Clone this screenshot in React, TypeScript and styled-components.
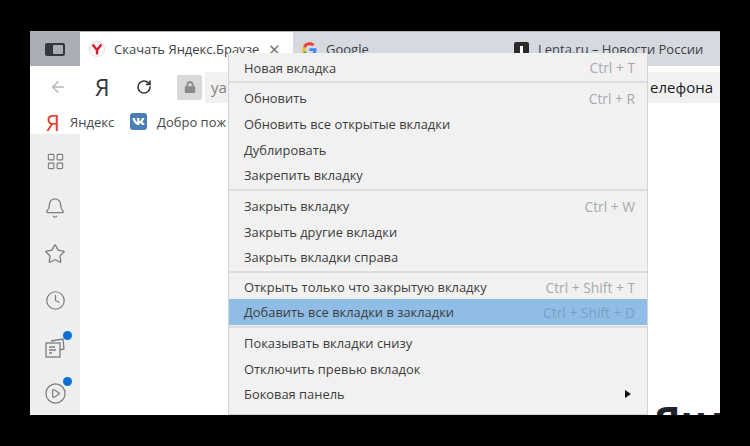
import React from "react";
import styled, { createGlobalStyle } from "styled-components";
import { ArrowLeft, Bell, CirclePlay, Clock, LayoutGrid, RotateCw, Star } from "lucide-react";
import { FaLock, FaVk } from "react-icons/fa";

const GlobalStyle = createGlobalStyle`
  html, body {
    margin: 0;
    height: 446px;
    overflow: hidden;
    background: #000;
    font-family: "Open Sans", "Noto Sans", sans-serif;
  }
`;

const Frame = styled.div`
  width: 750px;
  height: 446px;
  padding: 31px 30px 31px 30px;
  box-sizing: border-box;
`;

const Window = styled.div`
  position: relative;
  width: 690px;
  height: 384px;
  display: flex;
  flex-direction: column;
  background: #fff;
  border-top: 1px solid #a9b3bb;
  box-sizing: border-box;
  overflow: hidden;
`;

const TabStrip = styled.div`
  display: flex;
  height: 34px;
  flex: none;
  background: #d6d9e0;
`;

const SideToggle = styled.div`
  width: 50px;
  background: #a9adb4;
  display: flex;
  align-items: center;
  justify-content: center;
`;

const Tab = styled.div<{ $active?: boolean; $width: number }>`
  width: ${(p) => p.$width}px;
  flex: none;
  background: ${(p) => (p.$active ? "#fff" : "transparent")};
  display: flex;
  align-items: center;
  gap: 9px;
  padding-left: 9px;
  box-sizing: border-box;
  font-size: 13px;
  color: #3c3f44;
  white-space: nowrap;
  overflow: hidden;
`;

const TabTitle = styled.span`
  flex: 1;
  overflow: hidden;
`;

const TabClose = styled.span`
  width: 25px;
  flex: none;
  font-size: 15px;
  color: #777;
`;

const AddressRow = styled.div`
  height: 37px;
  flex: none;
  box-sizing: border-box;
  display: flex;
  align-items: center;
  background: #fff;
  padding: 5px 0 0 19px;
`;

const NavSlot = styled.div<{ $width: number }>`
  width: ${(p) => p.$width}px;
  flex: none;
  display: flex;
  align-items: center;
`;

const BrandLetter = styled.span`
  font-size: 23px;
  line-height: 24px;
  color: #33363a;
`;

const LockBox = styled.div`
  width: 25px;
  height: 25px;
  background: #d9d9d9;
  border-radius: 2px;
  display: flex;
  align-items: center;
  justify-content: center;
  margin-right: 3px;
  flex: none;
`;

const UrlBox = styled.div`
  flex: 1;
  height: 31px;
  background: #f1f1f1;
  display: flex;
  align-items: center;
  justify-content: space-between;
  padding: 0 7px 0 6px;
  font-size: 15px;
  color: #808080;
`;

const UrlTail = styled.span`
  color: #1b1b1b;
`;

const BookmarkBar = styled.div`
  height: 31px;
  flex: none;
  box-sizing: border-box;
  display: flex;
  align-items: center;
  padding: 6px 0 0 16px;
  font-size: 13px;
  color: #45484c;
  white-space: nowrap;
`;

const BookmarkLogo = styled.span`
  color: #e8392b;
  font-size: 22px;
  width: 24px;
  flex: none;
`;

const BookmarkLabel = styled.span`
  width: 60px;
  flex: none;
`;

const VkBadge = styled.span`
  width: 17px;
  height: 17px;
  background: #4a7eb5;
  border-radius: 3px;
  display: flex;
  align-items: center;
  justify-content: center;
  margin-right: 10px;
  flex: none;
`;

const Body = styled.div`
  flex: 1;
  min-height: 0;
  display: flex;
`;

const Sidebar = styled.div`
  width: 50px;
  flex: none;
  background: #eeeeee;
  display: flex;
  flex-direction: column;
  align-items: center;
  padding-top: 4px;
  box-sizing: border-box;
`;

const SideItem = styled.div`
  position: relative;
  height: 46.4px;
  width: 50px;
  flex: none;
  display: flex;
  align-items: center;
  justify-content: center;
  color: #7d7d7d;
`;

const Dot = styled.span`
  position: absolute;
  right: 8px;
  top: 7px;
  width: 9px;
  height: 9px;
  border-radius: 50%;
  background: #0b6fd6;
`;

const Content = styled.div`
  flex: 1;
  overflow: hidden;
  padding: 264px 0 0 574px;
  font-size: 40px;
  line-height: 44px;
  font-weight: 700;
  color: #20202e;
  white-space: nowrap;
`;

const Menu = styled.div`
  position: absolute;
  left: 198px;
  top: 21px;
  width: 420px;
  height: 362px;
  box-sizing: border-box;
  background: #f1f1f1;
  border-left: 1px solid #d4d4d4;
  border-right: 1px solid #d4d4d4;
  border-bottom: 1px solid #d4d4d4;
  padding-top: 2px;
`;

const MenuRow = styled.div<{ $highlight?: boolean; $step: number }>`
  height: ${(p) => p.$step}px;
  display: flex;
  align-items: center;
  justify-content: space-between;
  padding: 0 11px 0 15px;
  font-size: 12.9px;
  color: #3d3d3d;
  background: ${(p) => (p.$highlight ? "#8fbde6" : "transparent")};
`;

const Shortcut = styled.span<{ $highlight?: boolean }>`
  color: ${(p) => (p.$highlight ? "#7c9fbf" : "#a8a8a8")};
  font-size: 13.8px;
  padding-right: 1px;
`;

const MenuDivider = styled.div`
  height: 2px;
  margin: 1px 0 2px;
  background: #dcdcdc;
`;

const Arrow = styled.span`
  width: 0;
  height: 0;
  margin-right: 5px;
  border-left: 6px solid #111;
  border-top: 4px solid transparent;
  border-bottom: 4px solid transparent;
`;

const YandexTabIcon = () => (
  <svg width="16" height="16" viewBox="0 0 16 16">
    <circle cx="8" cy="8" r="7.5" fill="#fff" stroke="#f2d5d5" />
    <path d="M3.6 3.6 L8 9 L12.4 3.6 M8 9 V13.4" fill="none" stroke="#e3152b" strokeWidth="2.4" />
  </svg>
);

const GoogleIcon = () => (
  <svg width="15" height="15" viewBox="0 0 48 48">
    <path fill="#ea4335" d="M24 10c3.500 0 6.600 1.200 9 3.500l6.700-6.700C35.600 3.100 30.200 1 24 1 15 1 7.300 6.100 3.500 13.600l7.800 6C13.200 14.100 18.100 10 24 10z" />
    <path fill="#4285f4" d="M46.500 24.500c0-1.600-.1-3.100-.4-4.500H24v9h12.700c-.6 2.900-2.200 5.300-4.700 7l7.300 5.700c4.300-4 7.200-9.900 7.200-17.200z" />
    <path fill="#fbbc05" d="M11.300 28.400c-.5-1.400-.7-2.900-.7-4.400s.3-3 .7-4.400l-7.800-6C1.900 16.800 1 20.300 1 24s.9 7.200 2.500 10.400l7.800-6z" />
    <path fill="#34a853" d="M24 47c6.200 0 11.400-2 15.300-5.600L32 35.700c-2 1.400-4.700 2.300-8 2.300-5.900 0-10.800-4-12.700-9.600l-7.800 6C7.300 41.900 15 47 24 47z" />
  </svg>
);

const LentaIcon = () => (
  <svg width="15" height="15" viewBox="0 0 15 15">
    <rect width="15" height="15" rx="2" fill="#2b2b2b" />
    <rect x="6" y="4" width="3" height="11" fill="#fff" />
  </svg>
);

const PanelIcon = () => (
  <svg width="20" height="13" viewBox="0 0 20 13">
    <rect width="20" height="13" rx="2" fill="#34383e" />
    <rect x="8" y="2" width="10" height="9" rx="1" fill="#a9adb4" />
  </svg>
);

const NotesIcon = () => (
  <svg width="22" height="22" viewBox="0 0 22 22" fill="none" stroke="#7d7d7d" strokeWidth="1.300">
    <path d="M7 5 L19 3 L20 13 L16 14" />
    <rect x="2" y="7" width="14" height="14" />
    <path d="M5 11 H11 M5 14 H12 M5 17 H8" />
  </svg>
);

const firstGroup = [
  { label: "Обновить", key: "Ctrl + R", step: 26 },
  { label: "Обновить все открытые вкладки", step: 26 },
  { label: "Дублировать", step: 25 },
  { label: "Закрепить вкладку", step: 26 },
];

const secondGroup = [
  { label: "Закрыть вкладку", key: "Ctrl + W", step: 26 },
  { label: "Закрыть другие вкладки", step: 25 },
  { label: "Закрыть вкладки справа", step: 26 },
];

export default function App() {
  return (
    <Frame>
      <GlobalStyle />
      <Window>
        <TabStrip>
          <SideToggle>
            <PanelIcon />
          </SideToggle>
          <Tab $active $width={213}>
            <YandexTabIcon />
            <TabTitle>Скачать Яндекс.Браузер</TabTitle>
            <TabClose>✕</TabClose>
          </Tab>
          <Tab $width={212}>
            <GoogleIcon />
            <TabTitle>Google</TabTitle>
          </Tab>
          <Tab $width={215}>
            <LentaIcon />
            <TabTitle>Lenta.ru – Новости России</TabTitle>
          </Tab>
        </TabStrip>
        <AddressRow>
          <NavSlot $width={46}>
            <ArrowLeft size={18} color="#b5b5b5" strokeWidth={2} />
          </NavSlot>
          <NavSlot $width={41}>
            <BrandLetter>Я</BrandLetter>
          </NavSlot>
          <NavSlot $width={41}>
            <RotateCw size={16} color="#33363a" strokeWidth={2.4} />
          </NavSlot>
          <LockBox>
            <FaLock size={12} color="#8a8a8a" />
          </LockBox>
          <UrlBox>
            <span>ya</span>
            <UrlTail>елефона</UrlTail>
          </UrlBox>
        </AddressRow>
        <BookmarkBar>
          <BookmarkLogo>Я</BookmarkLogo>
          <BookmarkLabel>Яндекс</BookmarkLabel>
          <VkBadge>
            <FaVk size={13} color="#fff" />
          </VkBadge>
          <span>Добро пож</span>
        </BookmarkBar>
        <Body>
          <Sidebar>
            <SideItem>
              <LayoutGrid size={19} strokeWidth={1.4} />
            </SideItem>
            <SideItem>
              <Bell size={22} strokeWidth={1.4} />
            </SideItem>
            <SideItem>
              <Star size={22} strokeWidth={1.4} />
            </SideItem>
            <SideItem>
              <Clock size={21} strokeWidth={1.4} />
            </SideItem>
            <SideItem>
              <NotesIcon />
              <Dot />
            </SideItem>
            <SideItem>
              <CirclePlay size={23} strokeWidth={1.300} />
              <Dot />
            </SideItem>
          </Sidebar>
          <Content>Янд</Content>
        </Body>
        <Menu>
          <MenuRow $step={25}>
            Новая вкладка
            <Shortcut>Ctrl + T</Shortcut>
          </MenuRow>
          <MenuDivider />
          {firstGroup.map((item) => (
            <MenuRow key={item.label} $step={item.step}>
              {item.label}
              {item.key && <Shortcut>{item.key}</Shortcut>}
            </MenuRow>
          ))}
          <MenuDivider />
          {secondGroup.map((item) => (
            <MenuRow key={item.label} $step={item.step}>
              {item.label}
              {item.key && <Shortcut>{item.key}</Shortcut>}
            </MenuRow>
          ))}
          <MenuDivider />
          <MenuRow $step={24}>
            Открыть только что закрытую вкладку
            <Shortcut>Ctrl + Shift + T</Shortcut>
          </MenuRow>
          <MenuRow $highlight $step={26}>
            Добавить все вкладки в закладки
            <Shortcut $highlight>Ctrl + Shift + D</Shortcut>
          </MenuRow>
          <MenuDivider />
          <MenuRow $step={26}>Показывать вкладки снизу</MenuRow>
          <MenuRow $step={25}>Отключить превью вкладок</MenuRow>
          <MenuRow $step={25}>
            Боковая панель
            <Arrow />
          </MenuRow>
        </Menu>
      </Window>
    </Frame>
  );
}
